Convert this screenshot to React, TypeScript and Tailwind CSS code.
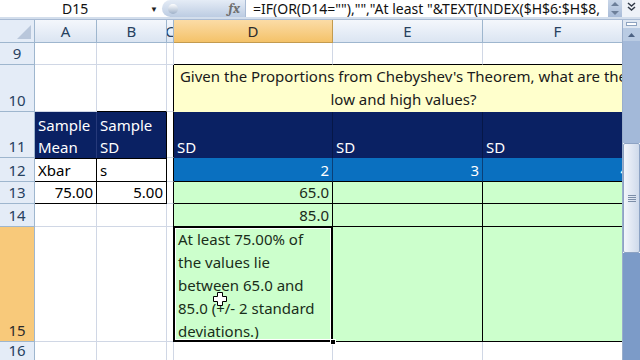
import React from "react";

const grid = "border-r border-b border-[#d0d7e5]";
const font = { fontFamily: '"Noto Sans", "Open Sans", sans-serif' };

type CellProps = {
  className?: string;
  children?: React.ReactNode;
};

const Cell = ({ className = "", children }: CellProps) => (
  <div className={`overflow-hidden whitespace-nowrap text-[15px] leading-[22px] px-[3px] ${className}`}>
    {children}
  </div>
);

const RowHead = ({ n, active = false }: { n: number; active?: boolean }) => (
  <div
    className={`flex items-end justify-center border-r border-b border-[#9eb6ce] text-[15px] leading-[22px] ${
      active ? "bg-[#f8c97a] text-[#2b2b2b]" : "bg-[#e4ecf7] text-[#27415f]"
    }`}
  >
    {n}
  </div>
);

const ColHead = ({ label, active = false }: { label: string; active?: boolean }) => (
  <div
    className={`flex items-center justify-center overflow-hidden border-r border-b text-[15px] ${
      active
        ? "bg-gradient-to-b from-[#fbdca6] to-[#f4c268] border-[#c39b4f] text-[#2b2b2b]"
        : "bg-gradient-to-b from-[#f4f7fc] to-[#dbe5f2] border-[#9eb6ce] text-[#27415f]"
    }`}
  >
    {label}
  </div>
);

const FormulaBar = () => (
  <div className="flex h-[17px] bg-white">
    <div className="flex w-[162px] items-center">
      <span className="flex-1 text-center text-[14px] leading-[17px] text-[#111]">D15</span>
      <span className="mr-[4px] text-[8px] text-[#222]">▼</span>
    </div>
    <div className="flex w-[83px] items-center rounded-l-full bg-gradient-to-b from-[#e5ecf6] to-[#bccce2] pl-[6px] pr-[5px]">
      <div className="h-[10px] w-[10px] rounded-full bg-gradient-to-b from-white to-[#9fb1c9]" />
      <span className="ml-auto font-serif text-[14px] italic font-bold leading-[17px] text-[#6f6f6f]">fx</span>
    </div>
    <div className="flex flex-1 items-center border-l border-[#a9bbd4] pl-[7px] text-[14px] leading-[17px] text-[#111]">
      =IF(OR(D14=""),"","At least "&amp;TEXT(INDEX($H$6:$H$8,
    </div>
    <div className="flex w-[14px] flex-col items-center justify-between bg-gradient-to-b from-[#c9d6e8] to-[#a9bcd8] py-[2px]">
      <svg width="8" height="4" viewBox="0 0 8 4"><path d="M0 4 L4 0 L8 4 Z" fill="#6d7f99" /></svg>
      <svg width="8" height="4" viewBox="0 0 8 4"><path d="M0 0 L4 4 L8 0 Z" fill="#6d7f99" /></svg>
    </div>
    <div className="flex w-[18px] items-start justify-center bg-[#eef2f8] pt-[2px]">
      <svg width="9" height="9" viewBox="0 0 9 9" fill="none" stroke="#303a48" strokeWidth="1.5">
        <path d="M1 1 L4.5 4 L8 1" />
        <path d="M1 5 L4.5 8 L8 5" />
      </svg>
    </div>
  </div>
);

const Scrollbar = () => (
  <div className="flex w-[18px] flex-col border-l border-[#9aaecb]">
    <div className="flex h-[8px] items-center justify-center bg-[#dfe7f2]">
      <div className="h-[4px] w-[11px] border border-[#8ea3c0] bg-white" />
    </div>
    <div className="flex h-[13px] items-center justify-center bg-[#b9cbe3]">
      <svg width="7" height="4" viewBox="0 0 7 4"><path d="M0 4 L3.5 0 L7 4 Z" fill="#4c6283" /></svg>
    </div>
    <div className="h-[102px] bg-[#a3b9d9]" />
    <div className="flex h-[110px] items-center justify-center rounded-[2px] border border-[#8da3c4] bg-gradient-to-r from-[#f2f5fb] to-[#cfdaeb]">
      <div className="flex flex-col gap-[1px]">
        <div className="h-[1px] w-[8px] bg-[#7c8ea8]" />
        <div className="h-[1px] w-[8px] bg-[#7c8ea8]" />
        <div className="h-[1px] w-[8px] bg-[#7c8ea8]" />
        <div className="h-[1px] w-[8px] bg-[#7c8ea8]" />
      </div>
    </div>
    <div className="flex-1 bg-[#7c9bc8]" />
  </div>
);

const Sheet = () => (
  <div className="grid grid-cols-[35px_62px_70px_7px_159px_150px_150px] grid-rows-[23px_22px_47px_46px_24px_22px_23px_115px_20px] w-[633px]">
    {/* headers */}
    <div className="relative border-r border-b border-[#9eb6ce] bg-[#e4ecf7]">
      <svg className="absolute bottom-[3px] right-[3px]" width="14" height="14" viewBox="0 0 14 14">
        <path d="M14 0 L14 14 L0 14 Z" fill="#b9c7db" />
      </svg>
    </div>
    <ColHead label="A" />
    <ColHead label="B" />
    <ColHead label="C" />
    <ColHead label="D" active />
    <ColHead label="E" />
    <ColHead label="F" />

    {/* row 9 */}
    <RowHead n={9} />
    <Cell className={grid} />
    <Cell className={grid} />
    <Cell className={grid} />
    <Cell className="border-r border-[#d0d7e5] border-b border-b-black" />
    <Cell className="border-r border-[#d0d7e5] border-b border-b-black" />
    <Cell className="border-r border-[#d0d7e5] border-b border-b-black" />

    {/* row 10 */}
    <RowHead n={10} />
    <Cell className={grid} />
    <Cell className="border-r border-[#d0d7e5] border-b border-b-black" />
    <Cell className="border-r border-r-black border-b border-[#d0d7e5]" />
    <div className="col-span-3 flex flex-col items-center justify-end overflow-hidden whitespace-nowrap bg-[#ffffcc] pb-[1px] text-[15px] leading-[23px] text-[#1a1a1a]">
      <span>Given the Proportions from Chebyshev's Theorem, what are the</span>
      <span>low and high values?</span>
    </div>

    {/* row 11 */}
    <RowHead n={11} />
    <Cell className="flex flex-col justify-end bg-[#0a2163] text-white border-r border-[#26397a]">
      <span>Sample</span>
      <span>Mean</span>
    </Cell>
    <Cell className="flex flex-col justify-end bg-[#0a2163] text-white border-r border-r-black">
      <span>Sample</span>
      <span>SD</span>
    </Cell>
    <Cell className="border-r border-r-black border-b border-[#d0d7e5]" />
    <Cell className="flex items-end bg-[#0a2163] text-white border-r border-[#061747]">SD</Cell>
    <Cell className="flex items-end bg-[#0a2163] text-white border-r border-[#061747]">SD</Cell>
    <Cell className="flex items-end bg-[#0a2163] text-white border-r border-[#061747]">SD</Cell>

    {/* row 12 */}
    <RowHead n={12} />
    <Cell className="flex items-end border-r border-b border-black border-t border-t-black text-black">Xbar</Cell>
    <Cell className="flex items-end border-r border-b border-black border-t border-t-black text-black">s</Cell>
    <Cell className="border-r border-r-black border-b border-[#d0d7e5]" />
    <Cell className="flex items-end justify-end bg-[#0a70c0] text-white border-r border-b border-[#0a3f78] border-b-black">2</Cell>
    <Cell className="flex items-end justify-end bg-[#0a70c0] text-white border-r border-b border-[#0a3f78] border-b-black">3</Cell>
    <Cell className="flex items-end justify-end bg-[#0a70c0] text-white border-r border-b border-[#0a3f78] border-b-black">4</Cell>

    {/* row 13 */}
    <RowHead n={13} />
    <Cell className="flex items-end justify-end border-r border-b border-black text-black">75.00</Cell>
    <Cell className="flex items-end justify-end border-r border-b border-black text-black">5.00</Cell>
    <Cell className="border-r border-r-black border-b border-[#d0d7e5]" />
    <Cell className="flex items-end justify-end bg-[#ccffcc] border-r border-b border-black text-[#1a2a1a]">65.0</Cell>
    <Cell className="bg-[#ccffcc] border-r border-b border-black" />
    <Cell className="bg-[#ccffcc] border-r border-b border-black" />

    {/* row 14 */}
    <RowHead n={14} />
    <Cell className={grid} />
    <Cell className={grid} />
    <Cell className="border-r border-r-black border-b border-[#d0d7e5]" />
    <Cell className="flex items-end justify-end bg-[#ccffcc] border-r border-b border-black text-[#1a2a1a]">85.0</Cell>
    <Cell className="bg-[#ccffcc] border-r border-b border-black" />
    <Cell className="bg-[#ccffcc] border-r border-b border-black" />

    {/* row 15 */}
    <RowHead n={15} active />
    <Cell className={grid} />
    <Cell className={grid} />
    <Cell className="border-r border-r-black border-b border-[#d0d7e5]" />
    <div className="relative bg-[#ccffcc] border-r border-b border-black px-[4px] pt-[1px] text-[15px] leading-[23px] text-[#1a2e1a]">
      <div>At least 75.00% of</div>
      <div>the values lie</div>
      <div>between 65.0 and</div>
      <div>85.0 (+/- 2 standard</div>
      <div>deviations.)</div>
      <div className="pointer-events-none absolute -left-[1px] -top-[1px] -right-[1px] -bottom-[1px] border-2 border-black">
        <div className="h-full w-full border border-white" />
      </div>
      <div className="absolute -bottom-[4px] -right-[4px] h-[6px] w-[6px] border border-white bg-black" />
      <svg className="absolute left-[38px] top-[64px]" width="16" height="16" viewBox="0 0 16 16">
        <path d="M5.5 1.5 H10.5 V5.5 H14.5 V10.5 H10.5 V14.5 H5.5 V10.5 H1.5 V5.5 H5.5 Z" fill="white" stroke="black" strokeWidth="1" />
      </svg>
    </div>
    <Cell className="bg-[#ccffcc] border-r border-b border-black" />
    <Cell className="bg-[#ccffcc] border-r border-b border-black" />

    {/* row 16 */}
    <RowHead n={16} />
    <Cell className={grid} />
    <Cell className={grid} />
    <Cell className={grid} />
    <Cell className={grid} />
    <Cell className={grid} />
    <Cell className={grid} />
  </div>
);

export default function App() {
  return (
    <div className="flex h-[360px] w-[640px] flex-col overflow-hidden bg-white" style={font}>
      <FormulaBar />
      <div className="h-[3px] border-b border-[#a9bbd4] bg-[#d3deec]" />
      <div className="flex flex-1 overflow-hidden">
        <div className="flex-1 overflow-hidden">
          <Sheet />
        </div>
        <Scrollbar />
      </div>
    </div>
  );
}
